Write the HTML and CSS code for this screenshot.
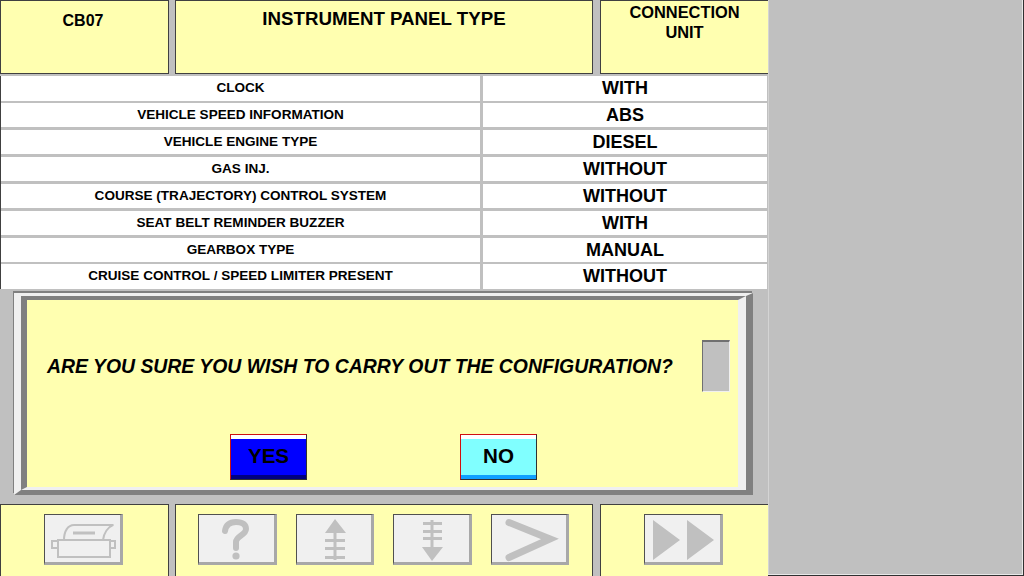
FILE: index.html
```html
<!DOCTYPE html>
<html lang="en">
<head>
<meta charset="utf-8">
<title>Instrument panel type</title>
<link rel="stylesheet" href="styles.css">
</head>
<body>
<main class="screen">
  <header class="bar head">
    <div class="panel code">CB07</div>
    <div class="panel title">INSTRUMENT PANEL TYPE</div>
    <div class="panel unit">CONNECTION<br>UNIT</div>
  </header>
  <section class="table">
    <div class="label">CLOCK</div><div class="value">WITH</div>
    <div class="label">VEHICLE SPEED INFORMATION</div><div class="value">ABS</div>
    <div class="label">VEHICLE ENGINE TYPE</div><div class="value">DIESEL</div>
    <div class="label">GAS INJ.</div><div class="value">WITHOUT</div>
    <div class="label">COURSE (TRAJECTORY) CONTROL SYSTEM</div><div class="value">WITHOUT</div>
    <div class="label">SEAT BELT REMINDER BUZZER</div><div class="value">WITH</div>
    <div class="label">GEARBOX TYPE</div><div class="value">MANUAL</div>
    <div class="label">CRUISE CONTROL / SPEED LIMITER PRESENT</div><div class="value">WITHOUT</div>
  </section>
  <section class="dialog">
    <div class="dialog-inner">
      <div class="message-row">
        <p class="message">ARE YOU SURE YOU WISH TO CARRY OUT THE CONFIGURATION?</p>
        <div class="slot"></div>
      </div>
      <div class="choices">
        <button class="choice yes">YES</button>
        <button class="choice no">NO</button>
      </div>
    </div>
  </section>
  <footer class="bar foot">
    <div class="panel tools tools-print">
      <div class="tool">
        <svg viewBox="0 0 79 51" class="icon" fill="none" stroke="#c0c0c0" stroke-width="2">
          <path d="M14 26H66V43H14Z"/>
          <path d="M14 27H8V34H14M66 27H71V34H66" />
          <path d="M20 26C20 17 24 11 30 11H69C64 13 60 19 59 26"/>
          <path d="M29 19H51" stroke-width="3"/>
          <path d="M69 10V12" stroke-width="1"/>
        </svg>
      </div>
    </div>
    <div class="panel tools tools-nav">
      <div class="tool">
        <svg viewBox="0 0 79 51" class="icon" fill="none" stroke="#c0c0c0" stroke-width="6">
          <path d="M27 17C28 10 33 8 38 8C45 8 48 11 48 15C48 21 38 22 38 28V34" stroke-linecap="round"/>
          <circle cx="38" cy="42" r="3.6" fill="#c0c0c0" stroke="none"/>
        </svg>
      </div>
      <div class="tool">
        <svg viewBox="0 0 79 51" class="icon" fill="#c0c0c0">
          <path d="M39 5L50 19H29Z"/>
          <path d="M37.500 19H40.500V46H37.500Z"/>
          <path d="M29 25H49V28H29ZM29 33H49V36H29ZM29 42H49V45H29Z"/>
        </svg>
      </div>
      <div class="tool">
        <svg viewBox="0 0 79 51" class="icon" fill="#c0c0c0">
          <path d="M39 47L50 33H29Z"/>
          <path d="M37.500 6H40.500V33H37.500Z"/>
          <path d="M30 8H49V11H30ZM30 16H49V19H30ZM30 23H49V26H30Z"/>
        </svg>
      </div>
      <div class="tool">
        <svg viewBox="0 0 79 51" class="icon" fill="none" stroke="#c0c0c0" stroke-width="7" stroke-linecap="round">
          <path d="M18 8.500L59 25L18 43.500"/>
        </svg>
      </div>
    </div>
    <div class="panel tools tools-ff">
      <div class="tool">
        <svg viewBox="0 0 79 51" class="icon" fill="#c0c0c0">
          <path d="M9 6L36 26L9 46ZM43 6L70 26L43 46Z"/>
        </svg>
      </div>
    </div>
  </footer>
</main>
<aside class="side"></aside>
</body>
</html>
```
FILE: styles.css
```css
* { box-sizing: border-box; }
html, body { margin: 0; height: 100%; }
body {
  display: flex;
  background: #c0c0c0;
  font-family: "Liberation Sans", Arial, sans-serif;
  font-weight: 700;
  color: #000;
  overflow: hidden;
}
.screen { width: 768px; height: 576px; flex: none; }
.side {
  flex: 1;
  border-right: 1px solid #303030;
  border-bottom: 1px solid #303030;
  box-shadow: inset -1px -1px 0 #e8e8e8, inset 1px 0 0 #d4d4d4;
}
.bar {
  display: grid;
  grid-template-columns: 169px 418px 175px;
  column-gap: 6px;
}
.head { height: 74px; }
.foot { height: 72px; margin-top: 9px; }
.panel {
  background: #ffffb0;
  border: 1px solid #404040;
  text-align: center;
}
.bar > .panel:last-child { margin-left: 1px; width: 168px; border-right: 0; }
.foot .panel { border-bottom: 0; }
.code { font-size: 16px; line-height: 18px; padding: 11px 3px 0 0; }
.title { font-size: 18.7px; line-height: 20px; padding-top: 8px; }
.unit { font-size: 16.4px; line-height: 20px; padding-top: 1px; }

.table {
  display: grid;
  grid-template-columns: 479px 284px;
  grid-template-rows: repeat(8, 24.5px);
  column-gap: 3px;
  row-gap: 2.43px;
  margin-top: 2px;
  border-left: 1px solid #404040;
}
.label, .value { background: #fff; text-align: center; }
.label { font-size: 13.55px; line-height: 24px; }
.value { font-size: 18px; line-height: 25px; }

.dialog {
  width: 739px;
  height: 202px;
  margin: 3.99px 0 0 14px;
  border-style: solid;
  border-width: 3px 7px 5px 7px;
  border-color: #f0f0f0 #808080 #808080 #f0f0f0;
  box-shadow: -1px -2px 0 #808080;
}
.dialog-inner {
  height: 100%;
  background: #ffffb0;
  border-style: solid;
  border-width: 4px 8px 3px 6px;
  border-color: #808080 #f0f0f0 #f0f0f0 #808080;
  display: flex;
  flex-direction: column;
}
.message-row {
  display: flex;
  align-items: center;
  justify-content: space-between;
  height: 92px;
  padding: 40px 8px 0 20px;
}
.message {
  margin: 0;
  padding-top: 2px;
  font-size: 19.4px;
  font-style: italic;
  white-space: nowrap;
}
.slot {
  width: 28px;
  height: 52px;
  background: #c0c0c0;
  border-style: solid;
  border-width: 2px 1px 1px 1px;
  border-color: #707070 #f0f0f0 #f0f0f0 #707070;
}
.choices {
  display: flex;
  gap: 153px;
  margin-top: 42px;
  padding-left: 203px;
}
.choice {
  width: 77px;
  height: 46px;
  padding: 0 0 1px;
  font: 700 20.6px "Liberation Sans", Arial, sans-serif;
  color: #000;
  border-style: solid;
  border-width: 1px;
  border-color: #d01010 #303030 #303030 #d01010;
}
.yes {
  background: #0000ff;
  box-shadow: inset 0 4px 0 #fff, inset 0 -4px 0 #000080;
}
.no {
  background: #80ffff;
  box-shadow: inset 0 4px 0 #fff, inset 0 -4px 0 #10a0ff;
}

.tools { display: flex; align-items: flex-start; padding-top: 9px; }
.tools-print { padding-left: 43px; }
.tools-nav { padding-left: 22px; gap: 19.17px; }
.tools-ff { padding-left: 43px; }
.tool {
  width: 78.5px;
  height: 51px;
  flex: none;
  background: #f0f0f0;
  border-style: solid;
  border-width: 1px 3px 3px 1px;
  border-color: #505050 #a8a8a8 #a8a8a8 #505050;
}
.icon { display: block; width: 79px; height: 51px; margin: -1px 0 0 -1px; }
```
